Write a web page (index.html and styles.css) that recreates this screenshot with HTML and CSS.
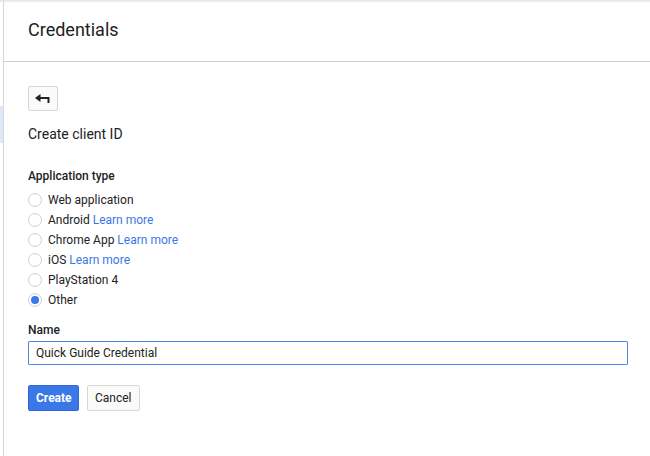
FILE: index.html
```html
<!DOCTYPE html>
<html lang="en">
<head>
  <meta charset="UTF-8">
  <meta name="viewport" content="width=device-width, initial-scale=1.0">
  <title>Credentials</title>
  <link rel="stylesheet" href="styles.css">
</head>
<body>
  <div class="layout">
    <div class="sidebar">
      <div class="nav-item"></div>
      <div class="nav-item active"></div>
    </div>

    <div class="main">
      <div class="header">
        <h1>Credentials</h1>
      </div>

      <div class="content">
        <button class="back-button" title="Back">
          <svg width="16" height="10" viewBox="0 0 16 10">
            <path d="M0 4 L5.5 0 V8 Z" fill="#222"/>
            <path d="M4 4 H13.5 V9" fill="none" stroke="#222" stroke-width="2"/>
          </svg>
        </button>

        <h2>Create client ID</h2>

        <div class="field-label">Application type</div>
        <div class="radio-list">
          <label class="radio"><span class="radio-dot"></span>Web application</label>
          <label class="radio"><span class="radio-dot"></span>Android&nbsp;<a href="#">Learn more</a></label>
          <label class="radio"><span class="radio-dot"></span>Chrome App&nbsp;<a href="#">Learn more</a></label>
          <label class="radio"><span class="radio-dot"></span>iOS&nbsp;<a href="#">Learn more</a></label>
          <label class="radio"><span class="radio-dot"></span>PlayStation 4</label>
          <label class="radio"><span class="radio-dot checked"></span>Other</label>
        </div>

        <div class="field-label name-label">Name</div>
        <input type="text" class="text-input" value="Quick Guide Credential">

        <div class="actions">
          <button class="btn btn-primary">Create</button>
          <button class="btn">Cancel</button>
        </div>
      </div>
    </div>
  </div>
</body>
</html>
```

FILE: styles.css
```css
body {
  margin: 0;
  font-family: Roboto, Arial, sans-serif;
  color: #222;
  background: #fff;
}
.layout {
  display: flex;
  height: 456px;
  position: relative;
}
.layout::before {
  content: "";
  position: absolute;
  left: 0;
  right: 0;
  top: 0;
  height: 3px;
  background: linear-gradient(#e2e2e2, rgba(255, 255, 255, 0));
}
.sidebar {
  width: 3px;
  border-right: 1px solid #d6d6d6;
  padding-top: 106px;
}
.nav-item {
  height: 0;
}
.nav-item.active {
  height: 37px;
  background: #dfe8f8;
}
.main {
  flex: 1;
}
.header {
  height: 61px;
  border-bottom: 1px solid #d0d0d0;
  padding-left: 24px;
}
h1 {
  margin: 0;
  padding-top: 18px;
  font-size: 18px;
  font-weight: 400;
  line-height: 24px;
  color: #222;
}
.content {
  padding: 24px 0 0 24px;
}
.back-button {
  display: flex;
  align-items: center;
  justify-content: center;
  width: 30px;
  height: 25px;
  padding: 0;
  background: #fafafa;
  border: 1px solid #d4d4d4;
  border-radius: 2px;
}
h2 {
  margin: 13px 0 0;
  font-size: 14px;
  font-weight: 400;
  line-height: 20px;
  color: #222;
}
.field-label {
  margin-top: 24px;
  font-size: 12px;
  font-weight: 500;
  line-height: 16px;
  color: #222;
}
.radio-list {
  margin-top: 6px;
}
.radio {
  display: flex;
  align-items: center;
  height: 20px;
  font-size: 12px;
  color: #222;
}
.radio a {
  color: #3b78e7;
  text-decoration: none;
}
.radio-dot {
  width: 12px;
  height: 12px;
  border: 1px solid #cfcfcf;
  border-radius: 50%;
  margin-right: 6px;
  box-sizing: content-box;
  display: flex;
  align-items: center;
  justify-content: center;
}
.radio-dot.checked::after {
  content: "";
  width: 8px;
  height: 8px;
  border-radius: 50%;
  background: #3b78e7;
}
.name-label {
  margin-top: 12px;
}
.text-input {
  display: block;
  box-sizing: border-box;
  margin-top: 3px;
  width: 600px;
  height: 24px;
  padding: 0 7px;
  border: 1px solid #4d84e8;
  border-radius: 1px;
  font-family: Roboto, Arial, sans-serif;
  font-size: 12px;
  color: #222;
  outline: none;
}
.actions {
  display: flex;
  gap: 8px;
  margin-top: 20px;
}
.btn {
  height: 26px;
  padding: 0 7px;
  background: #fafafa;
  border: 1px solid #d6d6d6;
  border-radius: 2px;
  font-family: Roboto, Arial, sans-serif;
  font-size: 12px;
  color: #222;
}
.btn-primary {
  width: 51px;
  background: #3b78e7;
  border-color: #3367d6;
  color: #fff;
  font-weight: 700;
}
```
